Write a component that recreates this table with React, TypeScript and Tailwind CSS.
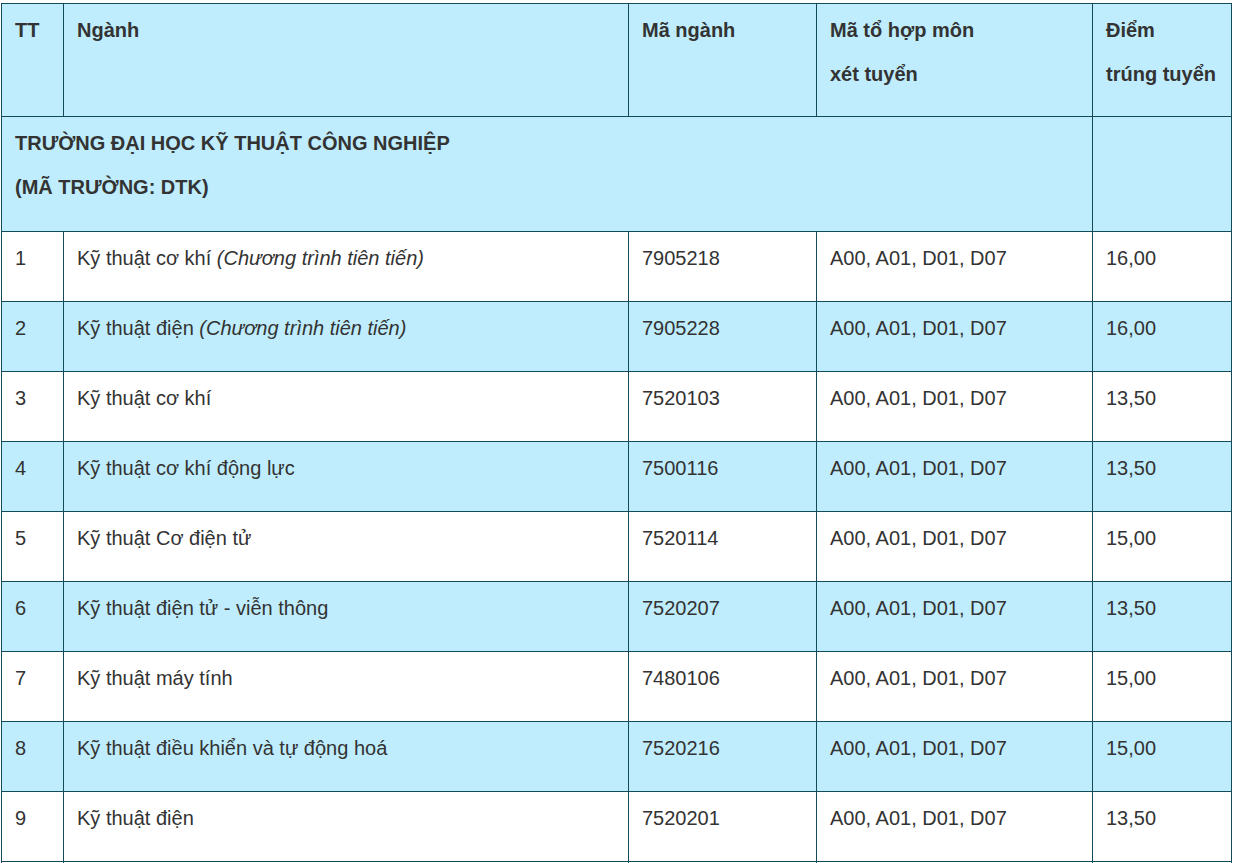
import React from 'react';

type Row = {
  tt: string;
  name: string;
  note?: string;
  code: string;
  combo: string;
  score: string;
};

const rows: Row[] = [
  { tt: '1', name: 'Kỹ thuật cơ khí', note: '(Chương trình tiên tiến)', code: '7905218', combo: 'A00, A01, D01, D07', score: '16,00' },
  { tt: '2', name: 'Kỹ thuật điện', note: '(Chương trình tiên tiến)', code: '7905228', combo: 'A00, A01, D01, D07', score: '16,00' },
  { tt: '3', name: 'Kỹ thuật cơ khí', code: '7520103', combo: 'A00, A01, D01, D07', score: '13,50' },
  { tt: '4', name: 'Kỹ thuật cơ khí động lực', code: '7500116', combo: 'A00, A01, D01, D07', score: '13,50' },
  { tt: '5', name: 'Kỹ thuật Cơ điện tử', code: '7520114', combo: 'A00, A01, D01, D07', score: '15,00' },
  { tt: '6', name: 'Kỹ thuật điện tử - viễn thông', code: '7520207', combo: 'A00, A01, D01, D07', score: '13,50' },
  { tt: '7', name: 'Kỹ thuật máy tính', code: '7480106', combo: 'A00, A01, D01, D07', score: '15,00' },
  { tt: '8', name: 'Kỹ thuật điều khiển và tự động hoá', code: '7520216', combo: 'A00, A01, D01, D07', score: '15,00' },
  { tt: '9', name: 'Kỹ thuật điện', code: '7520201', combo: 'A00, A01, D01, D07', score: '13,50' },
];

const cell = 'border border-[#134b5c] pl-[13px] pr-[10px] pt-[4px] align-top leading-[44px]';

export default function App() {
  return (
    <div className="min-h-screen bg-white pt-[3px] pl-[1px] font-['Liberation_Sans',Arial,sans-serif] text-[20px] text-[#333]">
      <table className="table-fixed border-collapse w-[1230px]">
        <colgroup>
          <col className="w-[62px]" />
          <col className="w-[565px]" />
          <col className="w-[188px]" />
          <col className="w-[276px]" />
          <col className="w-[139px]" />
        </colgroup>
        <thead>
          <tr className="h-[113px] bg-[#bfedfd] font-bold text-left">
            <th className={cell}>TT</th>
            <th className={cell}>Ngành</th>
            <th className={cell}>Mã ngành</th>
            <th className={cell}>
              <div>Mã tổ hợp môn</div>
              <div>xét tuyển</div>
            </th>
            <th className={`${cell} whitespace-nowrap pr-0`}>
              <div>Điểm</div>
              <div>trúng tuyển</div>
            </th>
          </tr>
        </thead>
        <tbody>
          <tr className="h-[115px] bg-[#bfedfd] font-bold">
            <td colSpan={4} className={cell}>
              <div>TRƯỜNG ĐẠI HỌC KỸ THUẬT CÔNG NGHIỆP</div>
              <div>(MÃ TRƯỜNG: DTK)</div>
            </td>
            <td className={cell}></td>
          </tr>
          {rows.map((r, i) => (
            <tr key={r.tt} className={`h-[70px] ${i % 2 === 0 ? 'bg-white' : 'bg-[#bfedfd]'}`}>
              <td className={cell}>{r.tt}</td>
              <td className={cell}>
                {r.name}
                {r.note && <em> {r.note}</em>}
              </td>
              <td className={cell}>{r.code}</td>
              <td className={cell}>{r.combo}</td>
              <td className={cell}>{r.score}</td>
            </tr>
          ))}
          <tr className="h-[70px] bg-white">
            <td className={cell}></td>
            <td className={cell}></td>
            <td className={cell}></td>
            <td className={cell}></td>
            <td className={cell}></td>
          </tr>
        </tbody>
      </table>
    </div>
  );
}
